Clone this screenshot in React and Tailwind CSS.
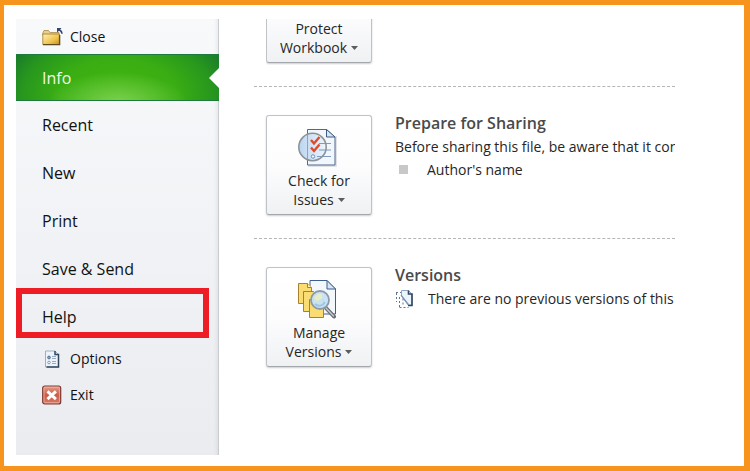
import React from 'react';

const navItems = ['Recent', 'New', 'Print', 'Save & Send', 'Help'];

function CloseIcon() {
  return (
    <svg width="22" height="20" viewBox="0 0 22 20" className="shrink-0">
      <defs>
        <linearGradient id="folder" x1="0" y1="0" x2="1" y2="1">
          <stop offset="0" stopColor="#fff0b8" />
          <stop offset="0.6" stopColor="#f0c550" />
          <stop offset="1" stopColor="#c98f1e" />
        </linearGradient>
      </defs>
      <path d="M.8 6 2 3.500h4.500L8 5.500h9v3H.8z" fill="#e9cf8c" stroke="#a98c4d" strokeWidth="0.8" />
      <path d="M.8 7h16.500v10.500H.8z" fill="url(#folder)" stroke="#a07a2c" strokeWidth="0.8" />
      <path d="M1 17.700h16.700V8" fill="none" stroke="#5d4a20" strokeWidth="1.200" />
      <path d="M15 1h4.500l-1.300 1.500c1.700 1 2.500 2.300 2.500 4.300h-1.500c-.2-1.500-.9-2.400-2.200-3L15 5.500z" fill="#34466e" />
    </svg>
  );
}

function OptionsIcon() {
  return (
    <svg width="22" height="20" viewBox="0 0 22 20" className="shrink-0">
      <path d="M3.5 2h9.5l3.5 3.5V18h-13z" fill="#edf3fa" stroke="#9db0c6" />
      <path d="M13 2v3.500h3.500V18h-12" fill="none" stroke="#33475f" strokeWidth="1.500" />
      <circle cx="7" cy="8.500" r="1.400" fill="#8ca4c2" stroke="#45607f" strokeWidth="0.8" />
      <circle cx="7" cy="13.500" r="1.300" fill="#fff" stroke="#6f87a5" strokeWidth="0.8" />
      <path d="M10 7.500h4M10 9.500h4M10 12.500h4M10 14.500h4" stroke="#8ea3bd" strokeWidth="0.9" />
    </svg>
  );
}

function ExitIcon() {
  return (
    <svg width="22" height="20" viewBox="0 0 22 20" className="shrink-0">
      <defs>
        <linearGradient id="exit" x1="0" y1="0" x2="0" y2="1">
          <stop offset="0" stopColor="#e5a08f" />
          <stop offset="0.5" stopColor="#cf5a45" />
          <stop offset="1" stopColor="#d77b66" />
        </linearGradient>
      </defs>
      <rect x="0.7" y="1" width="18" height="18" rx="2" fill="url(#exit)" stroke="#7e3a32" strokeWidth="1.200" />
      <rect x="2" y="2.300" width="15.400" height="15.400" rx="1" fill="none" stroke="#eeb5a8" strokeWidth="0.8" />
      <path d="m5.500 6.300 8.400 7.800m0-7.800-8.400 7.800" stroke="#fff" strokeWidth="3" />
    </svg>
  );
}

function CheckIcon() {
  return (
    <svg width="40" height="40" viewBox="0 0 40 40">
      <defs>
        <linearGradient id="lens" x1="0" y1="0" x2="1" y2="0">
          <stop offset="0" stopColor="#a9cbed" />
          <stop offset="1" stopColor="#eef5fc" />
        </linearGradient>
      </defs>
      <path d="M11 39h28V9" fill="none" stroke="#d5d9de" strokeWidth="1.500" />
      <path d="M10.500 2.500h19L38 10v28H10.500z" fill="#f2f7fd" stroke="#52698c" />
      <path d="M29.500 2.500V10H38z" fill="#d6e4f3" stroke="#3e5b83" />
      <path d="M24 16.500h10M24 23h10M20 29.500h14" stroke="#7f9cc2" strokeWidth="1.200" />
      <circle cx="15.500" cy="20" r="13.700" fill="url(#lens)" fillOpacity="0.8" stroke="#8d9299" strokeWidth="1.600" />
      <path d="M10.500 8v24" stroke="#7f9dc4" strokeWidth="0.8" />
      <path d="M22 16.500h6M22 23h6M20 29.500h5" stroke="#7f9cc2" strokeWidth="1.200" />
      <path d="m14 13 3 3.500 5.500-6.500M14 20.500l3 3.500 5.500-6.500" fill="none" stroke="#de4b28" strokeWidth="2.400" />
      <circle cx="16" cy="29.500" r="1.700" fill="#fff" stroke="#668bb8" />
    </svg>
  );
}

function VersionsIcon() {
  return (
    <svg width="40" height="40" viewBox="0 0 40 40">
      <path d="M13 1.500h17L38.500 10v25H13z" fill="#f3f8fd" stroke="#3d5f8f" />
      <path d="M30 1.500V10h8.500z" fill="#d8e6f4" stroke="#3d5f8f" />
      <path d="M1.500 4.500h9l4 4v16h-13z" fill="#f9dc72" stroke="#a7812f" />
      <path d="M10.500 4.500v4h4" fill="#fff0b0" stroke="#a7812f" />
      <path d="M6.500 12.500h10l4 4v16h-14z" fill="#f9dc72" stroke="#a7812f" />
      <path d="M12.500 20.500h14v18h-14z" fill="#f9dc72" stroke="#a7812f" />
      <path d="m29 29 8 8.500" stroke="#666b73" strokeWidth="4" strokeLinecap="round" />
      <path d="m29 29 7.500 8" stroke="#c4c8cf" strokeWidth="1.500" strokeLinecap="round" />
      <circle cx="23" cy="21" r="9" fill="#c5e1f4" fillOpacity="0.95" stroke="#8f99a6" strokeWidth="1.800" />
      <path d="M17 20c1-4 4-6 8-5v5l-5 2z" fill="#eef0bd" opacity="0.800" />
      <path d="M18 25c3 3 8 2 10-2" fill="none" stroke="#9cc5e6" strokeWidth="2" />
    </svg>
  );
}

function NoVersionsIcon() {
  return (
    <svg width="19" height="20" viewBox="0 0 19 20" className="shrink-0">
      <path d="M6.500 1.500h7L17 5v11h-4L6.500 7z" fill="#edf4fb" stroke="#8fa8c5" />
      <path d="M13.500 1.500V5H17v11.500h-4" fill="none" stroke="#31475f" strokeWidth="1.600" />
      <path d="M1 3.500h5M1.500 4v9M4.500 8v10.500M4.500 18.500h9M8 9.500v6" fill="none" stroke="#5f7593" strokeDasharray="2 2" />
      <path d="m6 6 7.500 9.500" stroke="#6d8bb0" strokeWidth="1.200" />
    </svg>
  );
}

function TileButton({ icon, top, bottom }) {
  return (
    <button
      type="button"
      className="flex h-[100px] w-[106px] shrink-0 flex-col items-center justify-end rounded-[3px] border border-[#bfc2c6] border-b-[#a3a6aa] bg-linear-to-b from-white via-[#fdfdfe] to-[#eff1f3] pb-[5px] text-sm leading-[19px] text-[#262626] shadow-[0_1px_2px_rgba(0,0,0,0.2)]"
    >
      {icon && <span className="mb-1 mr-1">{icon}</span>}
      <span>{top}</span>
      <span className="flex items-center gap-1">
        {bottom}
        <svg width="7" height="4" viewBox="0 0 7 4">
          <path d="M0 0h7L3.500 4z" fill="#5c5c5c" />
        </svg>
      </span>
    </button>
  );
}

function Section({ tile, title, children }) {
  return (
    <section className="flex gap-[23px] pt-7 pb-[23px] pl-3">
      {tile}
      <div className="whitespace-nowrap text-sm leading-[23px] text-[#262626]">
        <h2 className="-mt-1 text-base font-semibold leading-6 text-[#4a4a4a]">{title}</h2>
        {children}
      </div>
    </section>
  );
}

export default function App() {
  return (
    <div className="flex min-h-screen border-4 border-t-5 border-r-6 border-b-5 border-[#f7941d] bg-white pt-[14px] pr-[69px] pb-[11px] pl-3 font-['Open_Sans','Noto_Sans',sans-serif]">
      <nav className="flex w-[203px] shrink-0 flex-col border-r border-[#c9ccd0] bg-linear-to-b from-[#f8f9fb] to-[#eaecf0] text-base text-[#111] shadow-[inset_-4px_0_4px_-3px_rgba(0,0,0,0.08)]">
        <button type="button" className="flex h-[35px] items-center gap-[6px] pl-[26px] text-sm">
          <CloseIcon />
          Close
        </button>
        <button
          type="button"
          className="-mr-px flex h-[47px] items-center justify-between border-y border-[#1f7a3d] bg-[radial-gradient(ellipse_70px_30px_at_50%_105%,#7ad04f_0%,transparent_100%),radial-gradient(ellipse_120px_75px_at_50%_90%,#44b711_0%,#39ad13_50%,#27961e_80%,#1a7b2b_100%)] pl-[26px] text-left text-[#f0fae8]"
        >
          Info
          <svg width="10" height="20" viewBox="0 0 10 20">
            <path d="M10 0v20L0 10z" fill="#fff" />
          </svg>
        </button>
        {navItems.map((item) => (
          <button key={item} type="button" className="relative h-12 pl-[26px] text-left">
            {item}
            {item === 'Help' && (
              <span className="absolute -top-[5px] right-[9px] left-0 h-[50px] border-6 border-[#ee1c25]" />
            )}
          </button>
        ))}
        <button type="button" className="flex h-9 items-center gap-[6px] pl-[26px] text-sm">
          <OptionsIcon />
          Options
        </button>
        <button type="button" className="flex h-9 items-center gap-[6px] pl-[26px] text-sm">
          <ExitIcon />
          Exit
        </button>
      </nav>

      <main className="min-w-0 flex-1 divide-y divide-dashed divide-[#b5b5b5] overflow-hidden pl-[35px]">
        <section className="pb-[21px] pl-3">
          <div className="flex h-[46px] items-end overflow-hidden pb-[2px]">
            <TileButton top="Protect" bottom="Workbook" />
          </div>
        </section>
        <Section
          title="Prepare for Sharing"
          tile={<TileButton icon={<CheckIcon />} top="Check for" bottom="Issues" />}
        >
          <p>Before sharing this file, be aware that it con</p>
          <ul>
            <li className="flex items-center gap-[19px] pl-1">
              <span className="size-[9px] bg-[#c8c8c8]" />
              Author's name
            </li>
          </ul>
        </Section>
        <Section
          title="Versions"
          tile={<TileButton icon={<VersionsIcon />} top="Manage" bottom="Versions" />}
        >
          <p className="flex items-center gap-[14px]">
            <NoVersionsIcon />
            There are no previous versions of this
          </p>
        </Section>
      </main>
    </div>
  );
}
